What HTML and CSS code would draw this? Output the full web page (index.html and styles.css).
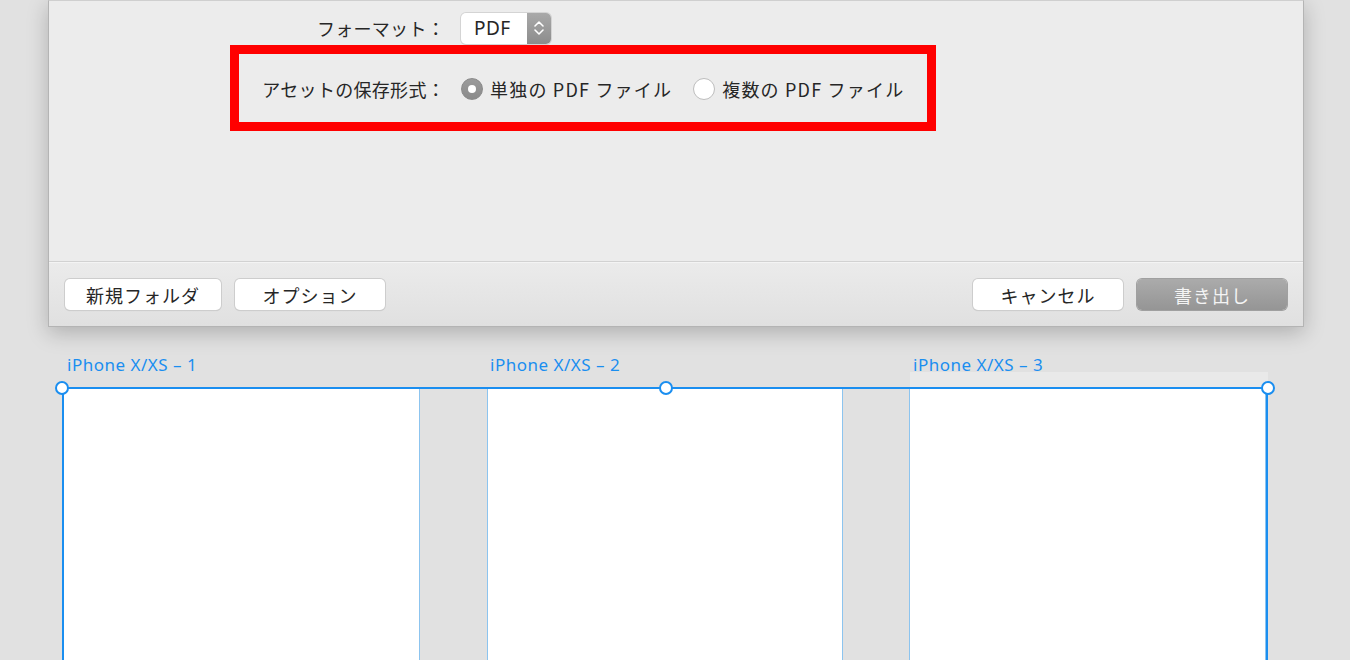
FILE: index.html
```html
<!DOCTYPE html>
<html lang="ja">
<head>
  <meta charset="UTF-8">
  <title>書き出し</title>
  <link rel="stylesheet" href="styles.css">
</head>
<body>

<!-- Export sheet -->
<div class="sheet">
  <div class="sheet-body">
    <div class="form-row row-format">
      <span class="form-label">フォーマット：</span>
      <div class="popup">
        <span class="popup-value">PDF</span>
        <span class="popup-arrows">
          <svg width="12" height="18" viewBox="0 0 12 18"><path d="M2 7 L6 3 L10 7 M2 11 L6 15 L10 11" fill="none" stroke="#fff" stroke-width="1.6" stroke-linecap="round" stroke-linejoin="round"/></svg>
        </span>
      </div>
    </div>
    <div class="form-row row-assets">
      <span class="form-label">アセットの保存形式：</span>
      <label class="radio"><span class="radio-dot checked"></span>単独の PDF ファイル</label>
      <label class="radio"><span class="radio-dot"></span>複数の PDF ファイル</label>
    </div>
    <div class="highlight"></div>
  </div>
  <div class="sheet-footer">
    <button class="btn">新規フォルダ</button>
    <button class="btn">オプション</button>
    <span class="spacer"></span>
    <button class="btn">キャンセル</button>
    <button class="btn btn-default">書き出し</button>
  </div>
</div>

<!-- Artboards -->
<div class="canvas">
  <div class="labels">
    <span class="ab-label ab-1">iPhone X/XS – 1</span>
    <span class="ab-label ab-2">iPhone X/XS – 2</span>
    <span class="ab-label ab-3">iPhone X/XS – 3</span>
  </div>
  <div class="selection">
    <div class="artboard ab-1"></div>
    <div class="ab-gap"></div>
    <div class="artboard ab-2"></div>
    <div class="ab-gap"></div>
    <div class="artboard ab-3"></div>
    <span class="handle h-left"></span>
    <span class="handle h-mid"></span>
    <span class="handle h-right"></span>
  </div>
</div>

</body>
</html>
```

FILE: styles.css
```css
body {
  margin: 0;
  background-color: #e1e1e1;
  font-family: "Noto Sans CJK JP", "Noto Sans", sans-serif;
  color: #262626;
  overflow: hidden;
  height: 660px;
}

.sheet {
  margin-left: 48px;
  width: 1256px;
  height: 327px;
  background-color: #ececec;
  border: 1px solid #b4b4b4;
  border-top-color: #cfcfcf;
  box-shadow: 0 6px 20px rgba(0, 0, 0, 0.22);
  box-sizing: border-box;
  display: flex;
  flex-direction: column;
}

.sheet-body {
  position: relative;
  flex: 1;
  padding-top: 11px;
  border-bottom: 1px solid #d2d2d2;
}

.form-row {
  display: flex;
  align-items: center;
  font-size: 18px;
}

.form-label {
  width: 396px;
  text-align: right;
  margin-right: 16px;
  letter-spacing: 0.3px;
}

.row-format {
  height: 32px;
}

.row-assets {
  height: 24px;
  margin-top: 33px;
}

.popup {
  display: flex;
  width: 90px;
  height: 31px;
  border-radius: 5px;
  background-color: #fff;
  box-shadow: 0 0 0 1px #d4d4d4, 0 1px 1px rgba(0, 0, 0, 0.12);
  overflow: hidden;
}

.popup-value {
  flex: 1;
  padding-left: 13px;
  line-height: 31px;
  font-family: "Noto Sans", sans-serif;
  font-size: 19px;
  letter-spacing: 0.5px;
}

.popup-arrows {
  width: 24px;
  display: flex;
  align-items: center;
  justify-content: center;
  background: linear-gradient(#a9a9a9, #8c8c8c);
}

.radio {
  display: flex;
  align-items: center;
  margin-right: 21px;
  letter-spacing: 1.2px;
}

.radio-dot {
  width: 22px;
  height: 22px;
  border-radius: 50%;
  box-sizing: border-box;
  background-color: #fff;
  border: 1px solid #bdbdbd;
  margin-right: 7px;
  position: relative;
}

.radio-dot.checked {
  background: linear-gradient(#9b9b9b, #8a8a8a);
  border-color: #8a8a8a;
}

.radio-dot.checked::after {
  content: "";
  position: absolute;
  left: 6px;
  top: 6px;
  width: 8px;
  height: 8px;
  border-radius: 50%;
  background-color: #fff;
}

/* red annotation frame */
.highlight {
  position: absolute;
  left: 181px;
  top: 44px;
  width: 706px;
  height: 86px;
  border: 9px solid #ff0000;
  box-sizing: border-box;
}

.sheet-footer {
  height: 64px;
  display: flex;
  align-items: center;
  padding: 0 16px;
  box-sizing: border-box;
  background: linear-gradient(#ebebeb, #e0e0e0);
  border-top: 1px solid #f4f4f4;
}

.spacer {
  flex: 1;
}

.btn {
  width: 156px;
  height: 31px;
  margin-right: 14px;
  border: none;
  border-radius: 5px;
  background-color: #fff;
  box-shadow: 0 0 0 1px #cdcdcd, 0 1px 1px rgba(0, 0, 0, 0.15);
  font-family: "Noto Sans CJK JP", sans-serif;
  font-size: 18px;
  letter-spacing: 1px;
  color: #262626;
  padding: 0;
}

.btn:nth-child(2) {
  width: 150px;
}

.btn:nth-child(4) {
  width: 150px;
}

.btn-default {
  width: 150px;
  margin-right: 0;
  color: #f4f4f4;
  background: linear-gradient(#ababab, #959595);
  box-shadow: 0 0 0 1px #a0a0a0;
}

.canvas {
  margin-left: 62px;
  width: 1206px;
}

.labels {
  height: 60px;
  display: flex;
  align-items: flex-end;
}

.ab-label {
  font-family: "Noto Sans", sans-serif;
  font-size: 17px;
  letter-spacing: 0.5px;
  color: #1a8ef0;
  padding-left: 5px;
  height: 30px;
  line-height: 16px;
  box-sizing: border-box;
}

.labels .ab-1,
.labels .ab-2 {
  width: 423px;
}

.labels .ab-3 {
  flex: 1;
  margin-left: 2px;
  padding-left: 3px;
  background: linear-gradient(transparent 15px, #e9e9e9 15px);
}

.selection {
  position: relative;
  display: flex;
  height: 290px;
  border: 2px solid #1a8ef0;
  border-bottom: none;
  box-sizing: border-box;
}

.artboard {
  background-color: #fff;
  width: 356px;
  box-shadow: inset -1px 0 0 #8cc4ef;
}

.artboard.ab-2,
.artboard.ab-3 {
  box-shadow: inset 1px 0 0 #8cc4ef, inset -1px 0 0 #8cc4ef;
}

.artboard.ab-3 {
  flex: 1;
}

.ab-gap {
  width: 67px;
  background-color: #e1e1e1;
}

.ab-gap + .artboard.ab-3 {
  margin-left: -1px;
}

.handle {
  position: absolute;
  top: -8px;
  width: 10px;
  height: 10px;
  border: 2px solid #1a8ef0;
  border-radius: 50%;
  background-color: #fff;
}

.h-left {
  left: -9px;
}

.h-mid {
  left: 595px;
}

.h-right {
  right: -9px;
}
```
